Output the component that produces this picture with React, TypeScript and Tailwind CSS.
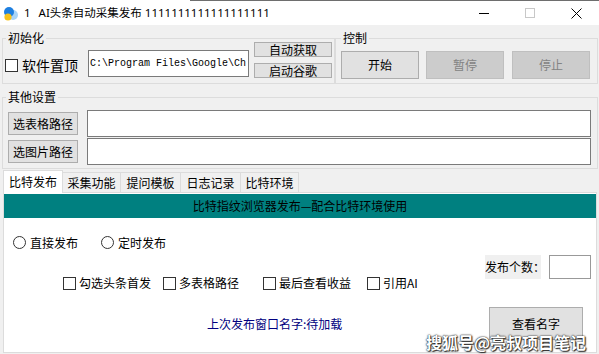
export default function App() {
  return (
    <div className="w-[599px] h-[354px] bg-[#f0f0f0] font-['Noto_Sans_CJK_SC',sans-serif] text-black flex flex-col overflow-hidden relative">
      {/* title bar */}
      <div className="h-[25px] bg-white flex flex-col shrink-0">
        <div className="h-[1px] ml-[190px] bg-[#6e6e6e]" />
        <div className="flex-1 flex items-center">
          <svg className="ml-[3px] w-[15px] h-[15px]" viewBox="0 0 15 15">
            <circle cx="10" cy="9" r="5" fill="#a9d4f7" />
            <circle cx="6" cy="6" r="5" fill="#1e7fe0" />
            <circle cx="5" cy="11" r="3.6" fill="#f7c21a" />
          </svg>
          <span className="ml-[6px] text-[11.5px] leading-none font-['Noto_Sans',sans-serif]">1</span>
          <span className="ml-[8px] text-[11.5px] leading-none font-['Noto_Sans','Noto_Sans_CJK_SC',sans-serif]">
            AI头条自动采集发布 1111111111111111111
          </span>
          <div className="ml-auto flex items-center h-full">
            <div className="w-[46px] h-full flex items-center justify-center">
              <div className="w-[10px] h-[1px] bg-black" />
            </div>
            <div className="w-[46px] h-full flex items-center justify-center">
              <div className="w-[10px] h-[10px] border border-[#c8c8c8]" />
            </div>
            <div className="w-[46px] h-full flex items-center justify-center">
              <svg className="w-[11px] h-[11px]" viewBox="0 0 11 11">
                <path d="M0.5 0.5 L10.5 10.5 M10.5 0.5 L0.5 10.5" stroke="#000" strokeWidth="1" />
              </svg>
            </div>
          </div>
        </div>
      </div>

      {/* body */}
      <div className="flex flex-col pl-[2px] pr-[1px] pt-[13px]">
        {/* row of groups */}
        <div className="flex h-[46px]">
          <div className="relative w-[333px] border border-[#dcdcdc] flex items-start">
            <span className="absolute left-[3px] top-[-7px] px-[2px] bg-[#f0f0f0] text-[12px] leading-[12px]">初始化</span>
            <div className="flex items-center ml-[2px] mt-[19px] h-[14px]">
              <span className="w-[13px] h-[13px] border border-[#333] bg-white" />
              <span className="ml-[4px] text-[14px] leading-[14px]">软件置顶</span>
            </div>
            <div className="ml-[10px] mt-[11px] w-[161px] h-[27px] border border-[#7a7a7a] bg-white flex items-center pl-[1px] overflow-hidden">
              <span className="font-['Liberation_Mono',monospace] text-[10px] leading-none whitespace-nowrap">C:\Program Files\Google\Ch</span>
            </div>
            <div className="ml-[5px] mt-[3px] flex flex-col gap-[6px]">
              <button className="w-[78px] h-[15px] bg-[#e1e1e1] border border-[#adadad] text-[12px] leading-none flex items-center justify-center">自动获取</button>
              <button className="w-[78px] h-[15px] bg-[#e1e1e1] border border-[#adadad] text-[12px] leading-none flex items-center justify-center">启动谷歌</button>
            </div>
          </div>
          <div className="relative w-[263px] border border-[#dcdcdc] flex items-start">
            <span className="absolute left-[5px] top-[-7px] px-[2px] bg-[#f0f0f0] text-[12px] leading-[12px]">控制</span>
            <button className="ml-[5px] mt-[12px] w-[78px] h-[28px] bg-[#e1e1e1] border border-[#adadad] text-[12px] flex items-center justify-center">开始</button>
            <button className="ml-[7px] mt-[12px] w-[78px] h-[28px] bg-[#cccccc] border border-[#bfbfbf] text-[12px] text-[#838383] flex items-center justify-center">暂停</button>
            <button className="ml-[8px] mt-[12px] w-[78px] h-[28px] bg-[#cccccc] border border-[#bfbfbf] text-[12px] text-[#838383] flex items-center justify-center">停止</button>
          </div>
        </div>

        {/* other settings */}
        <div className="relative mt-[13px] h-[72px] border border-[#dcdcdc] flex flex-col">
          <span className="absolute left-[3px] top-[-7px] px-[2px] bg-[#f0f0f0] text-[12px] leading-[12px]">其他设置</span>
          <div className="mt-[12px] h-[27px] flex items-center">
            <button className="ml-[5px] w-[70px] h-[23px] bg-[#e1e1e1] border border-[#adadad] text-[12px] flex items-center justify-center">选表格路径</button>
            <div className="ml-[9px] w-[504px] h-[27px] border border-[#7a7a7a] bg-white" />
          </div>
          <div className="mt-[1px] h-[27px] flex items-center">
            <button className="ml-[5px] w-[70px] h-[23px] bg-[#e1e1e1] border border-[#adadad] text-[12px] flex items-center justify-center">选图片路径</button>
            <div className="ml-[9px] w-[504px] h-[27px] border border-[#7a7a7a] bg-white" />
          </div>
        </div>

        {/* tabs */}
        <div className="ml-[1px] h-[23px] flex items-end">
          <div className="relative z-10 mb-[-1px] w-[60px] h-[23px] bg-white border-l border-t border-r border-[#dcdcdc] flex items-center justify-center text-[12px] leading-none pb-[1px]">比特发布</div>
          <div className="w-[58px] h-[20px] bg-[#f0f0f0] border-t border-r border-[#dcdcdc] flex items-center justify-center text-[12px] leading-none">采集功能</div>
          <div className="w-[60px] h-[20px] bg-[#f0f0f0] border-t border-r border-[#dcdcdc] flex items-center justify-center text-[12px] leading-none">提问模板</div>
          <div className="w-[60px] h-[20px] bg-[#f0f0f0] border-t border-r border-[#dcdcdc] flex items-center justify-center text-[12px] leading-none">日志记录</div>
          <div className="w-[58px] h-[20px] bg-[#f0f0f0] border-t border-r border-[#dcdcdc] flex items-center justify-center text-[12px] leading-none">比特环境</div>
        </div>

        {/* tab panel */}
        <div className="ml-[1px] w-[594px] h-[161px] bg-white border border-[#dcdcdc] flex flex-col">
          <div className="mt-[1px] h-[24px] bg-[#008080] flex items-center justify-center text-[12px] leading-none text-black">
            比特指纹浏览器发布—配合比特环境使用
          </div>

          <div className="mt-[18px] h-[13px] flex items-center pl-[9px]">
            <span className="w-[13px] h-[13px] rounded-full border border-[#333] bg-white" />
            <span className="ml-[4px] text-[12px] leading-none">直接发布</span>
            <span className="ml-[23px] w-[13px] h-[13px] rounded-full border border-[#333] bg-white" />
            <span className="ml-[4px] text-[12px] leading-none">定时发布</span>
          </div>

          <div className="mt-[6px] h-[35px] flex">
            <div className="self-end ml-[59px] h-[14px] flex items-center">
              <div className="w-[100px] flex items-center">
                <span className="w-[13px] h-[13px] border border-[#333] bg-white" />
                <span className="ml-[3px] text-[12px] leading-none">勾选头条首发</span>
              </div>
              <div className="w-[100px] flex items-center">
                <span className="w-[13px] h-[13px] border border-[#333] bg-white" />
                <span className="ml-[3px] text-[12px] leading-none">多表格路径</span>
              </div>
              <div className="w-[104px] flex items-center">
                <span className="w-[13px] h-[13px] border border-[#333] bg-white" />
                <span className="ml-[3px] text-[12px] leading-none">最后查看收益</span>
              </div>
              <div className="flex items-center">
                <span className="w-[13px] h-[13px] border border-[#333] bg-white" />
                <span className="ml-[3px] text-[12px] leading-none">引用AI</span>
              </div>
            </div>
            <div className="ml-auto mr-[5px] flex items-start">
              <div className="w-[56px] h-[24px] bg-[#f0f0f0] flex items-center text-[12px] leading-none whitespace-nowrap">发布个数：</div>
              <div className="ml-[8px] w-[42px] h-[24px] border border-[#999] bg-white" />
            </div>
          </div>

          <div className="mt-[17px] h-[33px] flex items-center">
            <span className="ml-[203px] text-[12px] leading-none text-[#000080]">上次发布窗口名字:待加载</span>
            <button className="ml-auto mr-[13px] w-[94px] h-[33px] bg-[#e1e1e1] border border-[#adadad] text-[12px] flex items-center justify-center">查看名字</button>
          </div>
        </div>
      </div>

      {/* watermark */}
      <span className="absolute right-[13px] bottom-[4px] text-[16px] leading-none font-bold text-white [text-shadow:0_0_2px_#222,0_0_1px_#222,1px_1px_1px_#333]">
        搜狐号@亮叔项目笔记
      </span>
    </div>
  );
}
